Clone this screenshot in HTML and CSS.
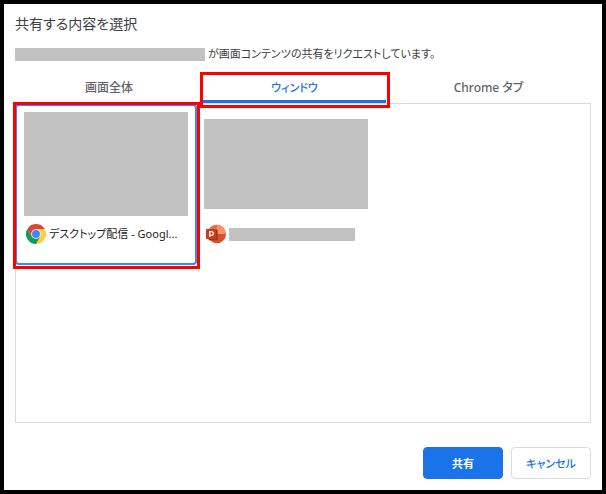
FILE: index.html
```html
<!DOCTYPE html>
<html lang="ja">
<head>
<meta charset="utf-8">
<title>共有する内容を選択</title>
<link rel="stylesheet" href="styles.css">
</head>
<body>
<main class="dialog">
  <h1 class="title">共有する内容を選択</h1>
  <p class="request"><span class="mask mask-origin"></span><span>が画面コンテンツの共有をリクエストしています。</span></p>
  <div class="tabs" role="tablist">
    <button class="tab" role="tab" aria-selected="false">画面全体</button>
    <button class="tab tab-active" role="tab" aria-selected="true">ウィンドウ</button>
    <button class="tab" role="tab" aria-selected="false">Chrome タブ</button>
  </div>
  <section class="panel">
    <button class="source source-selected">
      <span class="thumb"></span>
      <span class="caption">
        <svg class="icon" viewBox="0 0 48 48" aria-hidden="true">
          <path fill="#ffcd40" d="M24 12H44.8A24 24 0 0 1 24 48L34.4 30Z"/>
          <path fill="#0f9d58" d="M3.2 12A24 24 0 0 0 24 48L34.4 30 24 34 13.6 30Z"/>
          <path fill="#db4437" d="M3.2 12 13.6 30 24 24V12H44.8A24 24 0 0 0 3.2 12Z"/>
          <circle cx="24" cy="24" r="11.5" fill="#f1f1f1"/>
          <circle cx="24" cy="24" r="9.5" fill="#4285f4"/>
        </svg>
        <span class="name">デスクトップ配信 - Googl...</span>
      </span>
    </button>
    <button class="source" aria-label="PowerPoint">
      <span class="thumb thumb-wide"></span>
      <span class="caption">
        <svg class="icon" viewBox="0 0 48 48" aria-hidden="true">
          <circle cx="26" cy="24" r="22" fill="#d35230"/>
          <path fill="#ed6c47" d="M26 2A22 22 0 0 0 4 24H26Z"/>
          <path fill="#ff8f6b" d="M26 2A22 22 0 0 1 48 24H26Z"/>
          <rect x="6" y="13" width="22" height="26" rx="2" fill="#a33418"/>
          <rect x="0" y="12" width="24" height="24" rx="2" fill="#c43e1c"/>
          <path fill="none" stroke="#fff" stroke-width="3" d="M9 31V18h4a4 4 0 0 1 0 9H9"/>
        </svg>
        <span class="mask mask-name"></span>
      </span>
    </button>
  </section>
  <footer class="actions">
    <button class="button button-primary">共有</button>
    <button class="button">キャンセル</button>
  </footer>
</main>
</body>
</html>
```
FILE: styles.css
```css
* {
  box-sizing: border-box;
}

body {
  margin: 0;
  min-height: 100vh;
  display: flex;
  background: #000;
  padding: 4px;
  color: #3c4043;
  font-family: "Noto Sans", "Noto Sans CJK JP", sans-serif;
  font-feature-settings: "palt";
  font-size: 12px;
}

button {
  font: inherit;
  font-feature-settings: inherit;
  color: inherit;
  background: none;
  border: 0;
  padding: 0;
}

.dialog {
  flex: 1;
  min-width: 0;
  display: flex;
  flex-direction: column;
  background: #fff;
  padding: 8px 11px 11px;
}

.title {
  margin: 0;
  font-size: 14px;
  line-height: 24px;
  font-weight: 400;
}

.request {
  margin: 8px 0;
  display: flex;
  align-items: center;
  gap: 3px;
  font-size: 11px;
  line-height: 20px;
}

.mask {
  height: 13px;
  background: #c2c2c2;
}

.mask-origin {
  width: 190px;
}

.mask-name {
  width: 126px;
}

.tabs {
  display: grid;
  grid-template-columns: 188fr 183fr 205fr;
  height: 31px;
}

.tab {
  position: relative;
  color: #5f6368;
  font-weight: 500;
  line-height: 24px;
}

.tab-active {
  color: #1a73e8;
  border-bottom: 3px solid #1a73e8;
  padding-top: 3px;
  font-size: 11px;
}

.tab-active::after,
.source-selected::after {
  content: "";
  position: absolute;
  z-index: 1;
  border: 3px solid #f00;
  pointer-events: none;
}

.tab-active::after {
  inset: 0 -4px -8px -3px;
}

.panel {
  flex: 1;
  display: flex;
  align-items: flex-start;
  border: 1px solid #dadce0;
}

.source {
  position: relative;
  width: 182px;
  height: 161px;
  margin-left: -1px;
  border: 2px solid transparent;
  border-radius: 4px;
  padding: 6px 7px;
  display: flex;
  flex-direction: column;
  gap: 8px;
}

.source + .source {
  margin-left: -2px;
}

.source-selected {
  border-color: #4285f4;
}

.source-selected::after {
  inset: -4px -5px -6px -4px;
}

.thumb {
  width: 164px;
  height: 104px;
  background: #c2c2c2;
}

.thumb-wide {
  height: 90px;
  margin: 7px 0;
}

.caption {
  width: 164px;
  height: 20px;
  padding-left: 2px;
  display: flex;
  align-items: center;
  gap: 3px;
}

.icon {
  flex: none;
  width: 20px;
  height: 20px;
}

.name {
  white-space: nowrap;
  color: #202124;
  font-size: 11px;
  line-height: 20px;
}

.actions {
  display: flex;
  justify-content: flex-end;
  gap: 8px;
  margin-top: 24px;
}

.button {
  width: 80px;
  height: 32px;
  border: 1px solid #dadce0;
  border-radius: 4px;
  color: #1a73e8;
  font-size: 11px;
  font-weight: 500;
}

.button-primary {
  border-color: #1a73e8;
  background: #1a73e8;
  color: #fff;
  font-weight: 700;
}
```
